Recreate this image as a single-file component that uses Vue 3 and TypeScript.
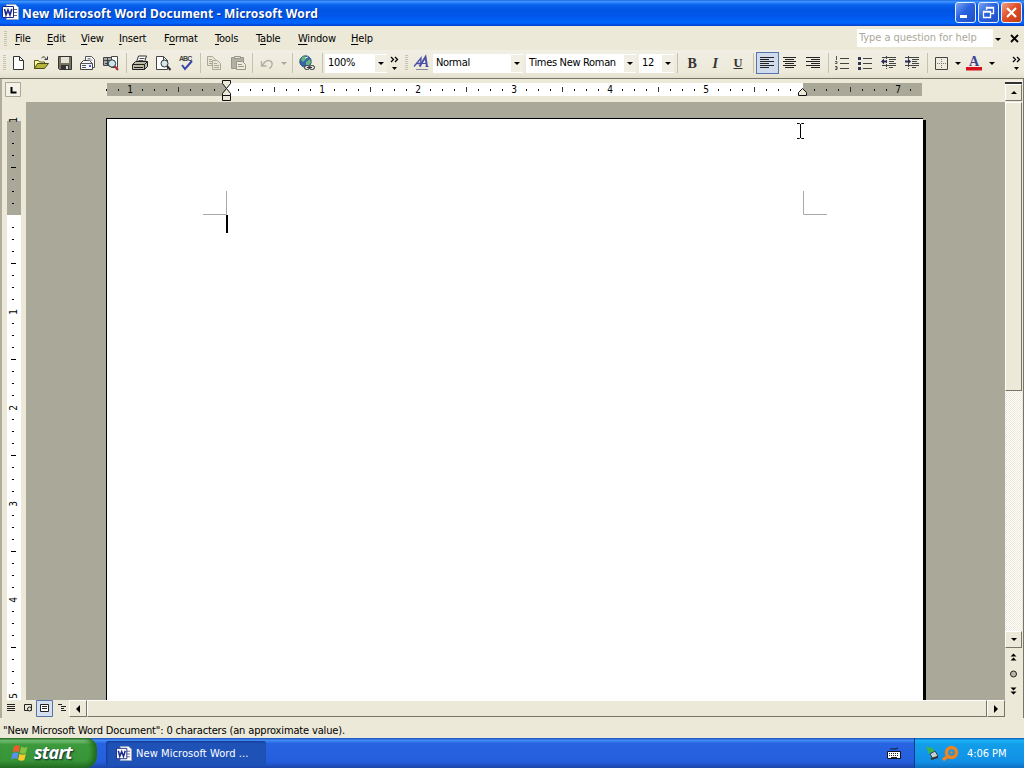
<script setup lang="ts">
type Tool = { k: string; w: number; icon?: string; text?: string; on?: boolean }

const menus = [
  { a: '', u: 'F', b: 'ile', w: 32 },
  { a: '', u: 'E', b: 'dit', w: 34 },
  { a: '', u: 'V', b: 'iew', w: 38 },
  { a: '', u: 'I', b: 'nsert', w: 45 },
  { a: 'F', u: 'o', b: 'rmat', w: 51 },
  { a: '', u: 'T', b: 'ools', w: 41 },
  { a: 'T', u: 'a', b: 'ble', w: 42 },
  { a: '', u: 'W', b: 'indow', w: 53 },
  { a: '', u: 'H', b: 'elp', w: 40 },
]

const lines = (rows: number[][]) =>
  `<path stroke="#222" fill="none" d="${rows.map(([x, y, w]) => `M${x} ${y}.5h${w}`).join('')}"/>`

const icons: Record<string, string> = {
  new: '<path d="M3.5 1.5h6l4 4v9h-10z" fill="#fff" stroke="#333"/><path d="M9.5 1.5v4h4" fill="none" stroke="#333"/>',
  open: '<path d="M1.5 13.5v-8h4l1 1.500h5v3" fill="#ffff9c" stroke="#5c5c20"/><path d="M1.500 13.500l3-5h11l-4 5z" fill="#b4b43c" stroke="#4c4c18"/><path d="M8.500 3c2-2 4-1 5 1.500M14.500 1.500v3h-3" fill="none" stroke="#333"/>',
  save: '<path d="M1.500 1.500h13v13h-12l-1-1z" fill="#77755f" stroke="#333"/><path d="M4 2h8v6H4z" fill="#e4e2d4"/><path d="M4 10h8v4H4z" fill="#333"/><path d="M9 11h2v3H9z" fill="#ddd"/>',
  mail: '<path d="M5.500 6v-4.500h6l3 3v8h-3" fill="#fff" stroke="#555"/><path d="M.5 8.500l3-3h6l3 3v6H.5z" fill="#f5f6fa" stroke="#444"/><path d="M.5 8.500h12M2 10.500h4M2 12.500h4" stroke="#555"/><path d="M7.500 3.500h3M7.500 5h5" stroke="#889"/><path d="M9 10h2v2H9z" fill="#55f"/>',
  find: '<path d="M.5 2.500h8v8h-8z" fill="#aaa" stroke="#444"/><path d="M1 5.500h7M4.500 2v8M2 8.500h5" stroke="#444"/><path d="M8.500 1.500h6v11h-6z" fill="#fff" stroke="#444"/><circle cx="9" cy="8.500" r="3.700" fill="#c7e8ef" stroke="#333"/><path d="M11.500 11l3.500 4" stroke="#a33" stroke-width="2"/>',
  print: '<path d="M4.500 7l2-6h8l-2 6" fill="#fff" stroke="#333"/><path d="M7.500 3.500h5M6.500 5.500h5" stroke="#555"/><path d="M.5 9.500l3-3h12v5l-3 3H.5z" fill="#bab8aa" stroke="#222"/><path d="M.5 9.500h12v5M12.500 9.500l3-3M2 12.500h9" fill="none" stroke="#222"/><path d="M8 10.500h2" stroke="#dd3"/>',
  preview: '<path d="M1.500 1.500h7l4 4v9h-11z" fill="#fff" stroke="#444"/><path d="M8.500 1.500v4h4" fill="none" stroke="#444"/><circle cx="9.500" cy="8.500" r="3.500" fill="#d1e8ed" stroke="#333"/><path d="M12 11l3.500 4" stroke="#333" stroke-width="2"/>',
  spell: '<text x="1" y="6" font-size="7" font-weight="bold" textLength="13" fill="#444" font-family="Liberation Sans">ABC</text><path d="M4 10l3 4 7-8" fill="none" stroke="#3944a8" stroke-width="2"/>',
  copy: '<g fill="#e9e6d6" stroke="#aaa899"><path d="M1.500 1.500h5l3 3v6h-8zM3 4.500h3M3 6.500h5M3 8.500h3"/><path d="M6.500 5.500h5l3 3v6h-8zM8 8.500h3M8 10.500h5M8 12.500h5"/></g>',
  paste: '<g stroke="#99978a"><path d="M1.500 2.500h12v11h-12z" fill="#b2b0a2"/><path d="M4.500 3.500v-2h6v2z" fill="#ddd"/><path d="M6.500 6.500h6l3 3v5h-9z" fill="#eeeadc"/><path d="M8 9.500h4M8 11.500h6"/></g>',
  undo: '<path d="M2.500 6v5h5M3 10.500l3-3.500c3-3 8-1 7 3-.3 2-1.500 3-3 3.500" fill="none" stroke="#b0aea0" stroke-width="1.300"/>',
  web: '<circle cx="6.500" cy="6.500" r="5.700" fill="#3664ad" stroke="#27506e"/><path d="M3 2c3-2 5 0 4 2L4 7 2 5zM7 7l4-3 1 3-3 5-2-2z" fill="#65b878"/><path d="M6 3l3-1" stroke="#dff"/><rect x="5.500" y="10.500" width="5" height="4" rx="2" fill="#ddd" stroke="#333"/><rect x="10.500" y="10.500" width="5" height="4" rx="2" fill="#ddd" stroke="#333"/><path d="M8 12.500h5" stroke="#333"/>',
  styles: '<g fill="none" stroke="#4a4fa8"><path d="M1 11.500L8 3l-.5 8.500M3.500 8.500h4" stroke-width="1.300"/><path d="M6.500 11.500L12.500 2l1.500 9.500" stroke-width="1.900"/><path d="M9 8.500h4.500M12.500 11.500h3"/><path d="M3 14.500h12" stroke="#889"/></g>',
  bold: '<text x="8" y="12.500" text-anchor="middle" font-size="14" font-weight="bold" fill="#333" font-family="Liberation Serif">B</text>',
  italic: '<text x="8" y="12.500" text-anchor="middle" font-size="14" font-weight="bold" font-style="italic" fill="#333" font-family="Liberation Serif">I</text>',
  under: '<text x="8" y="11.500" text-anchor="middle" font-size="12.500" font-weight="bold" fill="#333" font-family="Liberation Serif">U</text><path d="M3.500 13.500h9" stroke="#333"/>',
  left: lines([[1, 2, 14], [1, 4, 9], [1, 6, 14], [1, 8, 9], [1, 10, 14], [1, 12, 9]]),
  center: lines([[1, 2, 13], [3, 4, 9], [1, 6, 13], [3, 8, 9], [1, 10, 13], [3, 12, 9]]),
  right: lines([[1, 2, 14], [6, 4, 9], [1, 6, 14], [6, 8, 9], [1, 10, 14], [6, 12, 9]]),
  num: '<path d="M6 3.500h9M6 8.500h9M6 13.500h9" stroke="#444"/><path d="M2.500 1v4M1 6.500h2v2h-2M1 11.500h2v3h-2M1.500 13h2" fill="none" stroke="#555"/>',
  bullets: '<path d="M6 3.500h9M6 8.500h9M6 13.500h9" stroke="#444"/><path d="M1 2h3v3H1zM1 7h3v3H1zM1 12h3v3H1z" fill="#335"/>',
  outdent: '<path d="M1 2.500h14M8 4.500h7M8 6.500h5M8 8.500h7M1 10.500h14M8 12.500h4" stroke="#444"/><path d="M5.500 1v13" stroke="#444" stroke-dasharray="1 1"/><path d="M0 6.500l3-3v2h3v2H3v2z" fill="#2c2c55"/>',
  indent: '<path d="M1 2.500h14M8 4.500h7M8 6.500h5M8 8.500h7M1 10.500h14M8 12.500h4" stroke="#444"/><path d="M4.500 1v13" stroke="#444" stroke-dasharray="1 1"/><path d="M7 6.500l-3-3v2H1v2h3v2z" fill="#2c2c55"/>',
  border: '<path d="M2.500 2.500h12v12h-12z" fill="none" stroke="#444"/><path d="M4 8.500h10M8.500 4v10" stroke="#777" stroke-dasharray="1 1"/>',
  color: '<text x="8" y="11" text-anchor="middle" font-size="14" font-weight="bold" fill="#3d4290" font-family="Liberation Serif">A</text><path d="M0 12h16v3.500H0z" fill="#d8101c"/>',
}

const b = (icon: string, w = 23, on = false): Tool => ({ k: 'btn', icon, w, on })
const sep = (w: number): Tool => ({ k: 'sep', w })
const gap = (w: number): Tool => ({ k: 'gap', w })
const arrow = (w: number, dim = false): Tool => ({ k: 'arrow', w, on: dim })
const combo = (text: string, w: number): Tool => ({ k: 'combo', text, w })

const tools: Tool[] = [
  { k: 'handle', w: 7 }, b('new'), b('open'), b('save', 24), b('mail'), b('find'), sep(6),
  b('print'), b('preview'), b('spell'), sep(5), b('copy'), b('paste', 24), sep(5),
  b('undo', 24), arrow(10, true), sep(7), b('web'), sep(6), combo('100%', 62), { k: 'chev', w: 15 },
  { k: 'handle', w: 8 }, b('styles'), combo('Normal', 90), gap(3), combo('Times New Roman', 110), gap(3),
  combo('12', 35), sep(7), b('bold'), b('italic'), b('under'), sep(6), b('left', 23, true),
  b('center'), b('right'), sep(6), b('num'), b('bullets'), b('outdent', 24), b('indent'), sep(6),
  b('border'), arrow(10), b('color'), arrow(11), gap(12), { k: 'chev', w: 14 },
]

// Ruler geometry: 96px per inch, a tick every eighth.
const ticks = (from: number, to: number) =>
  Array.from({ length: to - from + 1 }, (_, i) => from + i).map((n) => ({
    pos: n * 12,
    label: n !== 0 && n % 8 === 0 ? String(Math.abs(n / 8)) : '',
    half: n % 4 === 0,
  }))
const hTicks = ticks(-10, 57).filter((t) => t.pos !== 0 && t.pos !== 576)
const vTicks = ticks(-8, 40).filter((t) => t.pos !== 0)
</script>

<template>
  <div class="screen">
    <header class="title">
      <svg class="wicon" width="17" height="17" viewBox="0 0 17 17">
        <path d="M4.500.5h9l3 3v12h-12z" fill="#fff" stroke="#9ab" /><path d="M11 5.500h4M11 8.500h4M11 11.500h4" stroke="#668" />
        <path d="M.5 2.500h11v11H.5z" fill="#fff" stroke="#1a2a88" /><path d="M2.500 5l1.500 6 2-5 2 5 1.800-6" fill="none" stroke="#1b2a8c" stroke-width="1.600" />
      </svg>
      <span class="caption">New Microsoft Word Document - Microsoft Word</span>
      <div class="winbtns">
        <i class="wb"><svg width="19" height="19"><path d="M4 12h7v3H4z" fill="#fff" /></svg></i>
        <i class="wb"><svg width="19" height="19"><path d="M7.500 7V4.500h7v6H12M7 5h8" fill="none" stroke="#fff" stroke-width="1.300" /><path d="M4.500 8.500h7v6h-7zM4 9h8" fill="none" stroke="#fff" stroke-width="1.300" /></svg></i>
        <i class="wb close"><svg width="19" height="19"><path d="M5 5l9 9M14 5l-9 9" stroke="#fff" stroke-width="2.200" /></svg></i>
      </div>
    </header>

    <nav class="menubar">
      <i class="grip menugrip"></i>
      <span v-for="m in menus" :key="m.u + m.b" class="menu" :style="{ width: m.w + 'px' }">{{ m.a }}<u>{{ m.u }}</u>{{ m.b }}</span>
      <div class="ask"><span>Type a question for help</span></div>
      <i class="tri"></i>
      <svg class="docx" width="9" height="9"><path d="M1 1l7 7M8 1L1 8" stroke="#000" stroke-width="1.800" /></svg>
    </nav>

    <div class="toolbar">
      <div v-for="(t, i) in tools" :key="i" class="tool" :class="[t.k, { on: t.on }]" :style="{ width: t.w + 'px' }">
        <svg v-if="t.icon" width="16" height="16" viewBox="0 0 16 16" v-html="icons[t.icon]"></svg>
        <template v-else-if="t.k === 'combo'"><span class="field">{{ t.text }}</span><span class="drop"><i class="tri"></i></span></template>
        <i v-else-if="t.k === 'arrow'" class="tri"></i>
        <svg v-else-if="t.k === 'chev'" width="9" height="15"><path d="M1 1l2.500 2.500L1 6M5 1l2.500 2.500L5 6" fill="none" stroke="#000" stroke-width="1.300" /><path d="M2 11h5L4.500 14z" /></svg>
        <i v-else-if="t.k === 'handle'" class="grip"></i>
      </div>
    </div>

    <main class="work">
      <div class="corner"><svg width="16" height="16"><path d="M.5.5h15v14H.5z" fill="#f4f2e8" stroke="#aca899" /><path d="M6.500 5v5.500h5" fill="none" stroke="#000" stroke-width="2" /></svg></div>
      <svg class="hruler" width="979" height="24" viewBox="26 78 979 24">
        <path d="M107 83h815v13H107z" fill="#aaa899" /><path d="M226 83h577v13H226z" fill="#fff" />
        <g v-for="t in hTicks" :key="t.pos">
          <text v-if="t.label" :x="226 + t.pos" y="93" text-anchor="middle">{{ t.label }}</text>
          <rect v-else :x="226 + t.pos" :y="t.half ? 87 : 89" width="1" :height="t.half ? 5 : 2" :fill="t.half ? '#333' : '#111'" />
        </g>
        <g fill="#ece9d8" stroke="#111">
          <path d="M222.500 80.500h8v3l-4 5-4-5zM222.500 95.500v-2l4-5 4 5v2z" /><path d="M222.500 95.500h8v5h-8z" />
          <path d="M798.500 95.500v-3l4-4 4 4v3z" />
        </g>
      </svg>
      <div class="vtop"><i class="split"></i><i class="sbtn"><i class="tri up"></i></i></div>

      <svg class="vruler" width="26" height="598" viewBox="0 102 26 598">
        <path d="M7 121h14v94H7z" fill="#aaa899" /><path d="M7 215h14v485H7z" fill="#fff" />
        <g v-for="t in vTicks" :key="t.pos">
          <text v-if="t.label" :transform="`translate(17 ${216 + t.pos}) rotate(-90)`" text-anchor="middle">{{ t.label }}</text>
          <rect v-else :x="t.half ? 11 : 12" :y="215 + t.pos" :width="t.half ? 5 : 2" height="1" />
        </g>
      </svg>
      <section class="canvas">
        <article class="page">
          <svg width="816" height="581" viewBox="107 119 816 581">
            <path d="M226.500 191v23.500H203M803.500 191v23.500H827" fill="none" stroke="#aaa" />
            <path d="M226 215h2v18h-2z" />
            <path d="M797 123.500h2.500l1 1 1-1h2.500M800.500 124v14M797 138.500h2.500l1-1 1 1h2.500" fill="none" stroke="#000" />
          </svg>
        </article>
      </section>
      <div class="vscroll">
        <i class="vthumb"></i><i class="vtrack"></i><i class="sbtn"><i class="tri"></i></i>
        <svg width="17" height="52"><path d="M5.500 8.500h6l-3-3zM5.500 12.500h6l-3-3zM5.500 39.500h6l-3 3zM5.500 43.500h6l-3 3z" /><circle cx="8.500" cy="26" r="3" fill="#bbb9ac" stroke="#222" /></svg>
      </div>
      <div class="bottom">
        <svg class="views" width="69" height="18" viewBox="0 0 69 18">
          <path d="M7 4.500h8M7 6.500h8M7 8.500h8M7 10.500h8" stroke="#222" />
          <path d="M24.500 4.500h7v6h-7z" fill="none" stroke="#222" /><circle cx="29.500" cy="9" r="2" fill="#ece9d8" stroke="#222" />
          <path d="M36.500.5h16v16h-16z" fill="#d5dfee" stroke="#5674a8" /><path d="M40.500 4.500h8v7h-8z" fill="#fff" stroke="#222" /><path d="M42 6.500h5M42 8.500h5" stroke="#222" />
          <path d="M58 4.500h4M61 6.500h5M61 8.500h3M61 10.500h5" stroke="#222" />
        </svg>
        <i class="sbtn hb"><i class="tri lt"></i></i><i class="hthumb"></i><i class="sbtn hb"><i class="tri rt"></i></i>
      </div>
    </main>

    <div class="status"><span>"New Microsoft Word Document": 0 characters (an approximate value).</span></div>

    <footer class="taskbar">
      <div class="start">
        <svg width="20" height="20" viewBox="0 0 20 20">
          <path d="M3 3.500c2-1.500 4-1.500 6-.3L7.800 9.300c-2-1.100-4-1-6 .2z" fill="#ee5a2c" /><path d="M10 3.700c2 1 4 1.200 6.500 0L15 10c-2 1-4 .8-6.200-.3z" fill="#82c341" />
          <path d="M1.500 10.500c2-1.200 4-1.200 6-.2L6.200 16c-2-1-4-.8-6 .4z" fill="#5a90f0" /><path d="M8.500 10.800c2 1 4 1.200 6.300.2L13.300 17c-2 1-4 .8-6.200-.3z" fill="#fbc92c" />
        </svg>
        <span>start</span>
      </div>
      <div class="task">
        <svg width="16" height="16" viewBox="0 0 17 17">
          <path d="M4.500.5h9l3 3v12h-12z" fill="#fff" stroke="#9ab" /><path d="M11 5.500h4M11 8.500h4M11 11.500h4" stroke="#668" />
          <path d="M.5 2.500h11v11H.5z" fill="#fff" stroke="#1a2a88" /><path d="M2.500 5l1.500 6 2-5 2 5 1.800-6" fill="none" stroke="#1b2a8c" stroke-width="1.600" />
        </svg>
        <span>New Microsoft Word ...</span>
      </div>
      <svg class="kbd" width="14" height="14"><path d="M3 3.500c2-2 3 1 8-1.500" fill="none" stroke="#112" /><path d="M.5 5.500h13v7H.5z" fill="#fff" stroke="#112" /><path d="M2 7.500h10M2 9.500h10" stroke="#223" stroke-dasharray="1 1" /><path d="M4 11.500h6" stroke="#223" /></svg>
      <div class="tray">
        <svg width="34" height="18" viewBox="0 0 34 18">
          <path d="M1 2l7 1 1 6-3-2-2 2-1-3z" fill="#39b54a" /><path d="M5 9l5-3 3 5-5 3z" fill="#c7d0d4" stroke="#344" /><path d="M6 14l7-2" stroke="#333" stroke-width="2" />
          <circle cx="26.500" cy="7.500" r="5" fill="none" stroke="#ef8420" stroke-width="3.400" /><circle cx="26.500" cy="7.500" r="1.200" fill="#ef8420" /><path d="M23 11l-5 4" stroke="#ef8420" stroke-width="3.400" />
        </svg>
        <span>4:06 PM</span>
      </div>
    </footer>
  </div>
</template>

<style>
html, body { margin: 0; overflow: hidden; }
</style>

<style scoped>
.screen { width: 1024px; height: 768px; display: flex; flex-direction: column; overflow: hidden; background: #ece9d8; color: #000; font: 11px/14px "DejaVu Sans Condensed", "DejaVu Sans", sans-serif; font-stretch: condensed; letter-spacing: -0.2px; }
i { display: block; font-style: normal; }
svg { display: block; flex: none; overflow: visible; }
.title { height: 26px; flex: none; display: flex; align-items: center; box-sizing: border-box; padding: 0 2px; background: linear-gradient(#1c66e0 0, #3d95ff 6%, #0a62ee 18%, #0054e3 40%, #0058ec 65%, #0066ff 88%, #003dc8 100%); color: #fff; }
.wicon { margin-top: -1px; }
.caption { margin: 2px 0 0 3px; font: bold 12px/16px "Noto Sans", sans-serif; letter-spacing: 0.16px; text-shadow: 1px 1px #0a318b; white-space: nowrap; }
.winbtns { margin-left: auto; display: flex; gap: 2px; padding-bottom: 1px; }
.wb { width: 19px; height: 19px; border: 1px solid #e6eefc; border-radius: 3px; background: linear-gradient(135deg, #7ba4f2, #2a62df 45%, #1e50c8); }
.close { background: linear-gradient(135deg, #f0a088, #e0502a 45%, #c03c14); }
.menubar { height: 24px; flex: none; display: flex; align-items: center; box-sizing: border-box; padding: 1px 5px 0 0; }
.grip { width: 3px; height: 16px; background: repeating-linear-gradient(#c6c3b3 0 1px, transparent 1px 2px); }
.menugrip { margin: 0 8px 0 4px; }
.menu { flex: none; box-sizing: border-box; white-space: nowrap; }
.menu u { text-underline-offset: 2px; text-decoration-thickness: 1px; }
.ask { margin-left: auto; width: 136px; height: 18px; margin-top: -1px; background: #fff; color: #aaa899; line-height: 18px; box-sizing: border-box; padding-left: 2px; white-space: nowrap; letter-spacing: -0.05px; }
.tri { width: 0; height: 0; border: 3px solid transparent; border-top-color: #000; border-bottom: 0; }
.ask + .tri { margin: 1px 9px 0 2px; }
.docx { margin-top: -1px; }
.toolbar { height: 28px; flex: none; display: flex; align-items: center; box-sizing: border-box; padding-bottom: 2px; background: linear-gradient(#f1efe4, #ece9d8 80%, #e2dfcd); }
.tool { flex: none; height: 22px; display: flex; align-items: center; justify-content: center; box-sizing: border-box; }
.btn svg { margin-left: -1px; }
.tool .grip { margin-left: 1px; }
.sep::before { content: ""; width: 1px; height: 20px; background: #c5c2b2; }
.btn.on { background: #d0dcec; border: 1px solid #5674b0; }
.arrow.on .tri { border-top-color: #aca899; }
.combo { height: 19px; background: #fff; justify-content: flex-start; letter-spacing: -0.32px; }
.field { flex: 1; padding-left: 3px; white-space: nowrap; }
.drop { width: 12px; height: 17px; background: #f1efe3; display: flex; align-items: center; justify-content: center; }
.work { height: 640px; flex: none; display: grid; grid-template: 24px 598px 18px / 26px 979px 19px; box-sizing: border-box; background: #ece9d8; box-shadow: inset 0 1px #77756a, inset 2px 0 #b0ad9c, inset -1px 0 #77756a; }
.corner { padding: 4px 0 0 5px; }
.hruler, .vruler { overflow: hidden; }
.hruler text, .vruler text { font: 10px "DejaVu Sans Condensed", sans-serif; letter-spacing: 0; }
.vtop { padding: 2px 0 0; }
.split { width: 17px; height: 4px; box-sizing: border-box; border-bottom: 2px solid #333; background: #f5f3e9; }
.sbtn { width: 17px; height: 17px; box-sizing: border-box; display: flex; align-items: center; justify-content: center; background: #ece9d8; border: 1px solid #fff; border-right-color: #77756a; border-bottom-color: #77756a; }
.up { border: 3px solid transparent; border-bottom-color: #000; border-top: 0; }
.lt { border: 4px solid transparent; border-right-color: #000; border-left: 0; }
.rt { border: 4px solid transparent; border-left-color: #000; border-right: 0; }
.canvas { background: #aaa899; padding: 16px 0 0 80px; overflow: hidden; }
.page { width: 816px; height: 581px; border-left: 1px solid #000; border-top: 1px solid #000; background: #fff; box-shadow: 3px 2px #000; }
.vscroll { display: flex; flex-direction: column; }
.vthumb { width: 17px; height: 289px; box-sizing: border-box; border: 1px solid #fff; border-right-color: #77756a; border-bottom-color: #77756a; }
.vtrack { width: 17px; flex: 1; background: repeating-conic-gradient(#fff 0 25%, #ece9d8 0 50%) 0 0 / 2px 2px; }
.bottom { grid-column: 1 / 4; display: flex; }
.hthumb { width: 900px; height: 17px; box-sizing: border-box; border: 1px solid #fff; border-right-color: #77756a; border-bottom-color: #77756a; }
.hb { width: 18px; }
.status { height: 20px; flex: none; display: flex; align-items: center; padding: 5px 0 0 3px; box-sizing: border-box; letter-spacing: -0.155px; }
.taskbar { height: 30px; flex: 1; display: flex; align-items: center; color: #fff; background: linear-gradient(#1f4fbd 0, #3f8cf3 8%, #2863e2 18%, #245edb 80%, #1c44a8 100%); }
.start { width: 97px; height: 30px; box-sizing: border-box; display: flex; align-items: center; padding-left: 11px; gap: 3px; border-radius: 0 10px 12px 0; background: linear-gradient(#2b6b2b 0, #7cc67c 8%, #3c9a3c 22%, #379437 75%, #256f25 100%); box-shadow: inset -4px 0 5px #1d6a1d; }
.start span { font: italic bold 18px/20px "Open Sans", "Noto Sans", sans-serif; text-shadow: 1px 1px 2px #123; margin-top: -3px; letter-spacing: -0.7px; }
.task { width: 160px; height: 25px; margin-left: 9px; box-sizing: border-box; display: flex; align-items: center; gap: 4px; padding: 2px 0 0 10px; border-radius: 3px; background: #1e52b7; box-shadow: inset 1px 1px 2px #123c8c; white-space: nowrap; letter-spacing: 0.08px; }
.kbd { margin-left: auto; margin-right: 13px; }
.tray { width: 110px; height: 30px; box-sizing: border-box; display: flex; align-items: center; padding: 1px 0 0 10px; gap: 8px; border-left: 1px solid #0b3c8c; background: linear-gradient(#0c59b9 0, #1cb2f5 8%, #139ee9 20%, #118fe6 80%, #0d6fc0 100%); white-space: nowrap; letter-spacing: -0.05px; }
</style>
